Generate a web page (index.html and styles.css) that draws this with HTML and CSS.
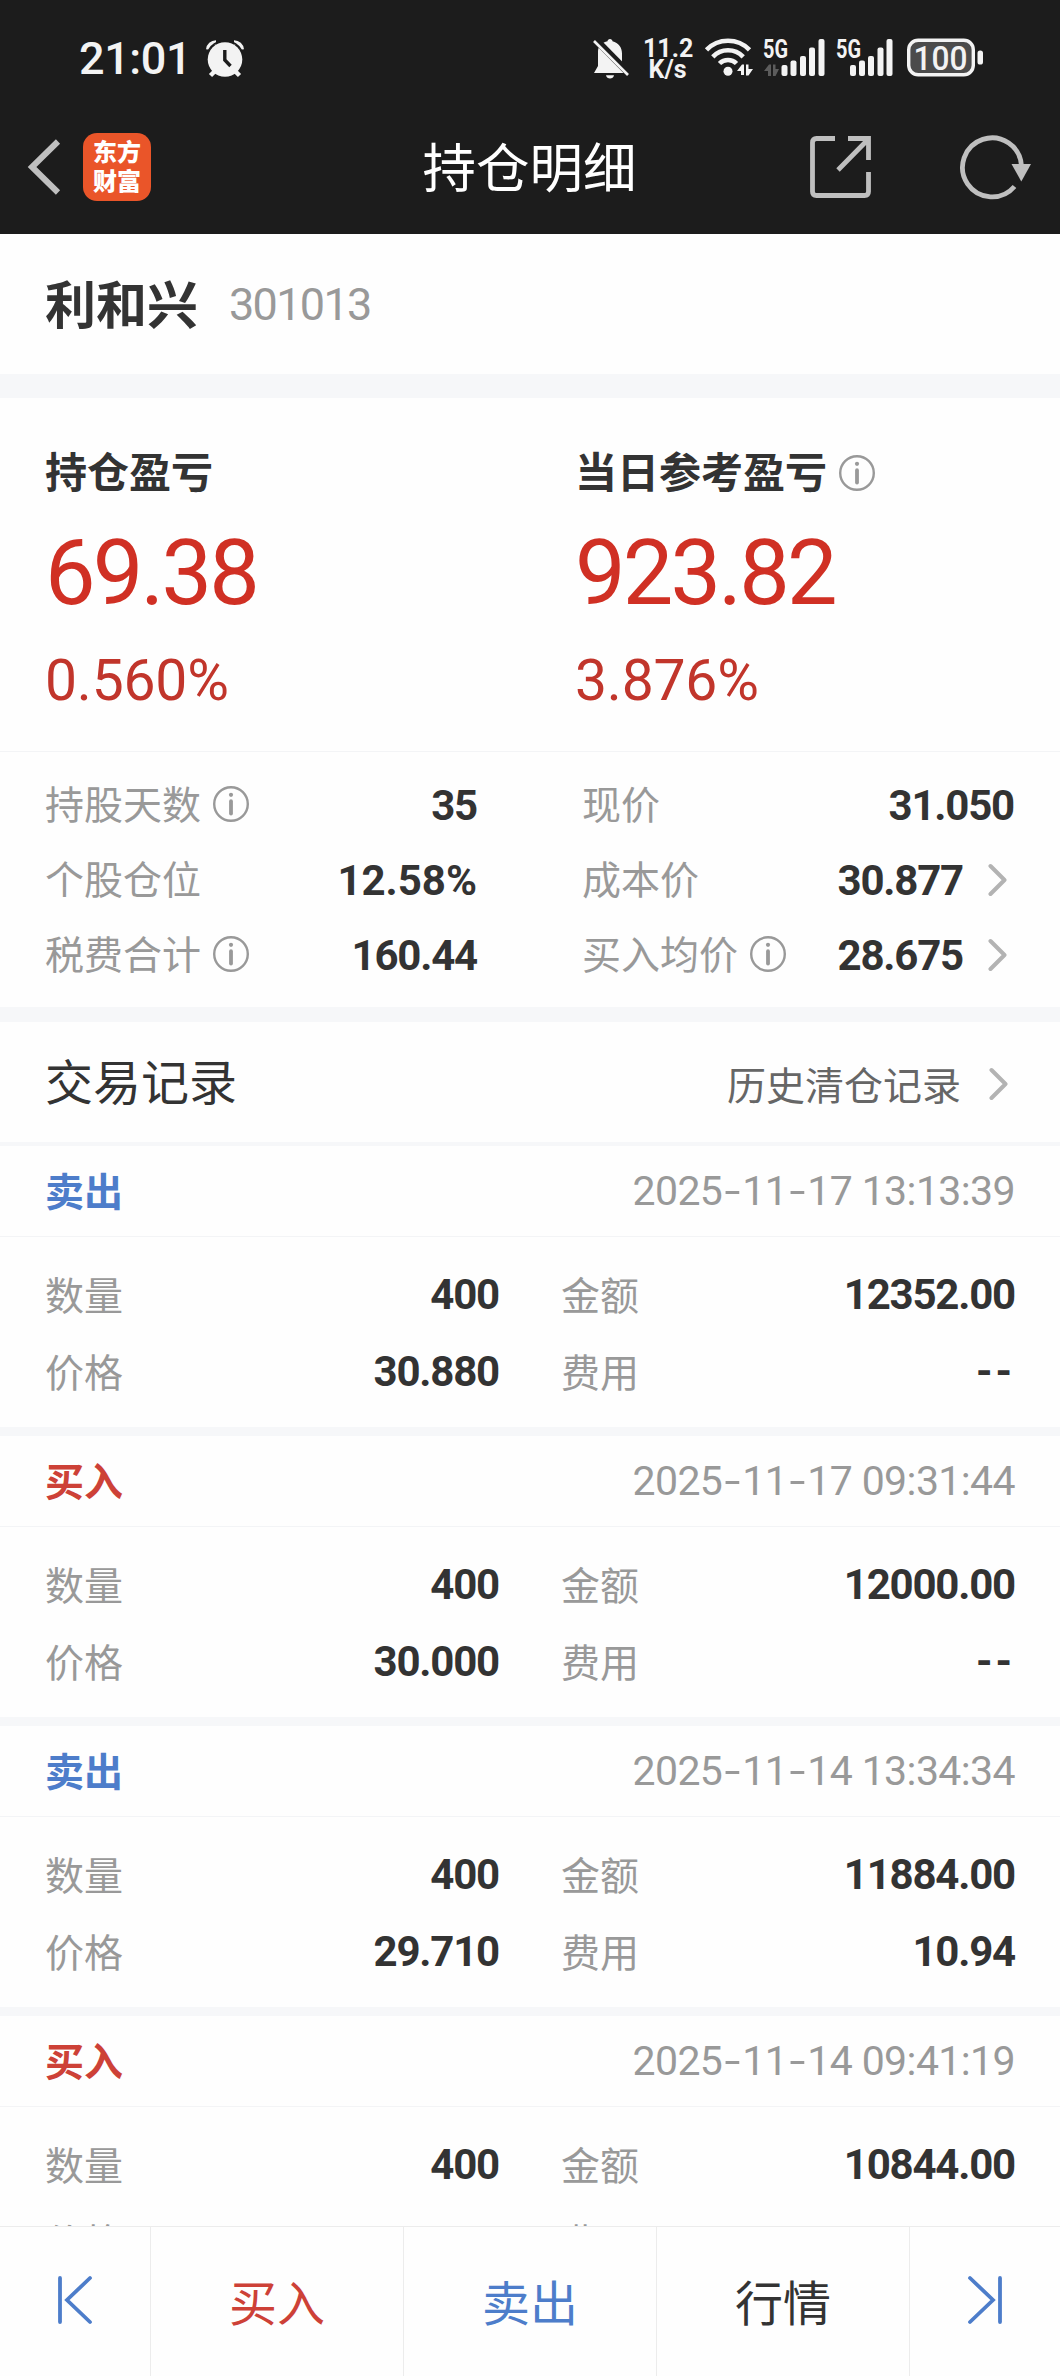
FILE: index.html
```html
<!DOCTYPE html>
<html lang="zh-CN">
<head>
  <meta charset="UTF-8">
  <title>持仓明细</title>
  <link rel="stylesheet" href="styles.css">
</head>
<body>
  <!-- shared icons -->
  <svg class="defs">
    <symbol id="info" viewBox="0 0 36 36">
      <circle cx="18" cy="18" r="16.8" fill="none" stroke="#999" stroke-width="2.4"/>
      <circle cx="18" cy="8.8" r="2.1" fill="#999"/>
      <path d="M18 15.2V27.5" stroke="#999" stroke-width="3.8" stroke-linecap="round"/>
    </symbol>
    <symbol id="arrow" viewBox="0 0 19 34">
      <path d="M2.5 3L16.5 17L2.5 31" fill="none" stroke="#b3b3b3" stroke-width="4" stroke-linecap="round" stroke-linejoin="round"/>
    </symbol>
  </svg>

  <div class="page">
    <header>
      <div class="status">
        <span class="time">21:01</span>
        <svg class="alarm" width="38" height="38" viewBox="0 0 38 38">
          <path d="M9 31L4.5 35.5M29 31L33.5 35.5" stroke="#f3f3f3" stroke-width="4.5"/>
          <circle cx="19" cy="19.5" r="17.3" fill="#f3f3f3"/>
          <path d="M2 9.5A8 8 0 0 1 10 2.2M36 9.5A8 8 0 0 0 28 2.2" fill="none" stroke="#f3f3f3" stroke-width="4"/>
          <path d="M1.5 13A18.5 18.5 0 0 1 12 1.9M36.5 13A18.5 18.5 0 0 0 26 1.9" fill="none" stroke="#1c1c1c" stroke-width="1.6"/>
          <path d="M18.8 10V20L24.5 26" fill="none" stroke="#1c1c1c" stroke-width="3.4"/>
        </svg>
        <div class="status-icons">
          <svg width="36" height="42" viewBox="0 0 36 42">
            <path d="M17 1C18.5 1 19.3 2 19.5 3.2C25.5 4.5 29 9.5 29 15.5V24L32 31L35 35H1L5 28V13C5 8 9.5 4 14.5 3.2C14.7 2 15.5 1 17 1Z" fill="#f3f3f3"/>
            <path d="M13 37.3H21C20.5 39.4 19 40.5 17 40.5S13.5 39.4 13 37.3Z" fill="#f3f3f3"/>
            <path d="M1 0L36 35.5" stroke="#1c1c1c" stroke-width="7"/>
            <path d="M1 3L35 37" stroke="#f3f3f3" stroke-width="2.6"/>
          </svg>
          <div class="speed"><span>11.2</span><span>K/s</span></div>
          <svg class="wifi" width="48" height="42" viewBox="0 0 48 42">
            <g fill="none" stroke="#f3f3f3" stroke-width="4.6">
              <path d="M1.5 11.8A30 30 0 0 1 44.5 11.8"/>
              <path d="M7.8 18.8A21 21 0 0 1 38.2 18.8"/>
              <path d="M14.5 25.5A12 12 0 0 1 31.5 25.5"/>
            </g>
            <circle cx="23" cy="33.3" r="4.5" fill="#f3f3f3"/>
            <path d="M32 33L37 26.5H39V37H36V33ZM41 26.5H43.5V31H48L43.5 37.5H41Z" fill="#f3f3f3"/>
          </svg>
          <svg class="signal" width="62" height="42" viewBox="0 0 62 42">
            <text x="0" y="19.5" textLength="25" lengthAdjust="spacingAndGlyphs">5G</text>
            <path d="M1 33L6 26.5H8V38H5V33ZM10 26.5H12.5V31H16L12.5 38H10Z" fill="#5c5c5c"/>
            <g fill="#f3f3f3">
              <rect x="18.5" y="27" width="6" height="11" rx="2"/>
              <rect x="27.5" y="22.5" width="6" height="15.5" rx="2"/>
              <rect x="37" y="18" width="6" height="20" rx="2"/>
              <rect x="46" y="9.5" width="6" height="28.5" rx="2"/>
              <rect x="55.5" y="1" width="6" height="37" rx="2"/>
            </g>
          </svg>
          <svg class="signal second" width="57" height="42" viewBox="0 0 57 42">
            <text x="0" y="19.5" textLength="25" lengthAdjust="spacingAndGlyphs">5G</text>
            <g fill="#f3f3f3">
              <rect x="14" y="27" width="6" height="11" rx="2"/>
              <rect x="23" y="22.5" width="6" height="15.5" rx="2"/>
              <rect x="32" y="18" width="6" height="20" rx="2"/>
              <rect x="41.5" y="9.5" width="6" height="28.5" rx="2"/>
              <rect x="50.5" y="1" width="6" height="37" rx="2"/>
            </g>
          </svg>
          <svg class="battery" width="76" height="42" viewBox="0 0 76 42">
            <rect x="1.7" y="2.2" width="64.6" height="34.6" rx="9.5" fill="#4b4b4b" stroke="#f3f3f3" stroke-width="3.4"/>
            <rect x="70.5" y="12.5" width="5.5" height="14" rx="2.6" fill="#f3f3f3"/>
            <text x="6.5" y="31.5" textLength="54" lengthAdjust="spacingAndGlyphs">100</text>
          </svg>
        </div>
      </div>
      <nav>
        <div class="nav-left">
          <svg width="33" height="56" viewBox="0 0 33 56">
            <path d="M30 2.5L4 28L30 53.5" fill="none" stroke="#bfbfbf" stroke-width="6"/>
          </svg>
          <div class="logo"><span>东方</span><span>财富</span></div>
        </div>
        <h1>持仓明细</h1>
        <div class="nav-right">
          <svg width="62" height="62" viewBox="0 0 62 62" fill="none" stroke="#bfbfbf" stroke-width="4.8">
            <path d="M25 2.5H6.5Q2.5 2.5 2.5 6.5V55.5Q2.5 59.5 6.5 59.5H54.5Q58.5 59.5 58.5 55.5V36"/>
            <path d="M38 2.5H58.5V24M57.5 4L28 34"/>
          </svg>
          <svg width="71" height="65" viewBox="0 0 71 65">
            <path d="M61.5 31A29.5 29.5 0 1 0 54.5 51.5" fill="none" stroke="#bfbfbf" stroke-width="4.8"/>
            <path d="M51.5 29H71L61.3 46.5Z" fill="#bfbfbf"/>
          </svg>
        </div>
      </nav>
    </header>

    <main>
      <section class="stock">
        <h2>利和兴</h2>
        <span class="code">301013</span>
      </section>

      <section class="profit">
        <div class="profit-item">
          <h3>持仓盈亏</h3>
          <p class="amount">69.38</p>
          <p class="percent">0.560%</p>
        </div>
        <div class="profit-item">
          <h3>当日参考盈亏 <svg class="info"><use href="#info"/></svg></h3>
          <p class="amount">923.82</p>
          <p class="percent">3.876%</p>
        </div>
      </section>

      <section class="detail">
        <div class="col">
          <div class="row"><label>持股天数</label><svg class="info"><use href="#info"/></svg><b>35</b></div>
          <div class="row"><label>个股仓位</label><b class="rate">12.58%</b></div>
          <div class="row"><label>税费合计</label><svg class="info"><use href="#info"/></svg><b>160.44</b></div>
        </div>
        <div class="col">
          <div class="row"><label>现价</label><b>31.050</b></div>
          <div class="row"><label>成本价</label><b>30.877</b><svg class="arrow"><use href="#arrow"/></svg></div>
          <div class="row"><label>买入均价</label><svg class="info"><use href="#info"/></svg><b>28.675</b><svg class="arrow"><use href="#arrow"/></svg></div>
        </div>
      </section>

      <section class="records-title">
        <h2>交易记录</h2>
        <a>历史清仓记录</a>
        <svg class="arrow"><use href="#arrow"/></svg>
      </section>

      <section class="record">
        <div class="record-head"><span class="sell">卖出</span><time>2025<i>-</i>11<i>-</i>17 13:13:39</time></div>
        <div class="record-body">
          <div class="row"><label>数量</label><b>400</b></div>
          <div class="row"><label>金额</label><b>12352.00</b></div>
          <div class="row"><label>价格</label><b>30.880</b></div>
          <div class="row"><label>费用</label><b class="none">--</b></div>
        </div>
      </section>

      <section class="record">
        <div class="record-head"><span class="buy">买入</span><time>2025<i>-</i>11<i>-</i>17 09:31:44</time></div>
        <div class="record-body">
          <div class="row"><label>数量</label><b>400</b></div>
          <div class="row"><label>金额</label><b>12000.00</b></div>
          <div class="row"><label>价格</label><b>30.000</b></div>
          <div class="row"><label>费用</label><b class="none">--</b></div>
        </div>
      </section>

      <section class="record">
        <div class="record-head"><span class="sell">卖出</span><time>2025<i>-</i>11<i>-</i>14 13:34:34</time></div>
        <div class="record-body">
          <div class="row"><label>数量</label><b>400</b></div>
          <div class="row"><label>金额</label><b>11884.00</b></div>
          <div class="row"><label>价格</label><b>29.710</b></div>
          <div class="row"><label>费用</label><b>10.94</b></div>
        </div>
      </section>

      <section class="record">
        <div class="record-head"><span class="buy">买入</span><time>2025<i>-</i>11<i>-</i>14 09:41:19</time></div>
        <div class="record-body">
          <div class="row"><label>数量</label><b>400</b></div>
          <div class="row"><label>金额</label><b>10844.00</b></div>
          <div class="row"><label>价格</label></div>
          <div class="row"><label>费用</label></div>
        </div>
      </section>
    </main>

    <footer>
      <div class="tab">
        <svg width="34" height="48" viewBox="0 0 34 48" fill="none" stroke="#4d7dca" stroke-width="3.8" stroke-linecap="round">
          <path d="M2 2V46M32 2L9 24L32 46"/>
        </svg>
      </div>
      <div class="tab buy">买入</div>
      <div class="tab sell">卖出</div>
      <div class="tab">行情</div>
      <div class="tab">
        <svg width="34" height="48" viewBox="0 0 34 48" fill="none" stroke="#4d7dca" stroke-width="3.8" stroke-linecap="round">
          <path d="M32 2V46M2 2L25 24L2 46"/>
        </svg>
      </div>
    </footer>
  </div>
</body>
</html>
```

FILE: styles.css
```css
* {
  margin: 0;
  padding: 0;
  box-sizing: border-box;
}

body {
  background-color: #fefefe;
  color: #333;
  font-family: Roboto, "Noto Sans CJK SC", sans-serif;
}

svg {
  display: block;
  flex-shrink: 0;
  overflow: visible;
}

.defs {
  display: none;
}

.page {
  display: flex;
  flex-direction: column;
  width: 1060px;
  height: 2376px;
  overflow: hidden;
}

/* top */
header {
  height: 234px;
  flex-shrink: 0;
  background-color: #1c1c1c;
}

.status {
  display: flex;
  align-items: center;
  height: 100px;
  padding: 16px 77px 0 79px;
  color: #f3f3f3;
}

.time {
  width: 127px;
  font-size: 45px;
  font-weight: 500;
  letter-spacing: -0.4px;
}

.alarm {
  margin-top: 2px;
}

.status-icons {
  display: flex;
  align-items: center;
  margin-left: auto;
  padding-top: 2px;
}

.speed {
  width: 49px;
  margin: -1px 13px 0 14px;
  font-size: 25px;
  font-weight: 700;
  line-height: 21px;
  text-align: center;
}

.speed span {
  display: block;
}

.signal {
  margin-left: 10px;
}

.signal.second {
  margin-left: 11px;
}

.signal text {
  fill: #f3f3f3;
  font-size: 26px;
  font-weight: 700;
}

.battery {
  margin-left: 14px;
}

.battery text {
  fill: #f3f3f3;
  font-size: 34px;
  font-weight: 500;
}

nav {
  display: grid;
  grid-template-columns: 1fr auto 1fr;
  align-items: center;
  height: 134px;
  padding: 0 29px 0 28px;
}

.nav-left,
.nav-right {
  display: flex;
  align-items: center;
}

.nav-left {
  gap: 22px;
}

.nav-right {
  justify-content: flex-end;
  gap: 88px;
}

.logo {
  width: 68px;
  height: 68px;
  padding-top: 6px;
  border-radius: 14px;
  background-color: #ea5529;
  color: #fff;
  font-size: 24px;
  font-weight: 900;
  line-height: 29px;
  text-align: center;
}

.logo span {
  display: block;
}

h1 {
  padding-top: 6px;
  font-size: 53.5px;
  font-weight: 400;
  line-height: 60px;
  color: #fff;
}

/* content */
main {
  flex: 1;
  min-height: 0;
  overflow: hidden;
}

.stock {
  display: flex;
  align-items: center;
  height: 164px;
  padding-left: 45px;
  border-bottom: 24px solid #f6f7f9;
}

.stock h2 {
  padding-top: 5px;
  font-size: 51px;
  font-weight: 700;
  line-height: 60px;
}

.code {
  margin-left: 31px;
  font-size: 45px;
  letter-spacing: -1.7px;
  color: #999;
}

.profit {
  display: flex;
  height: 354px;
  padding: 51px 0 0 45px;
  border-bottom: 1px solid #f3f4f6;
}

.profit-item {
  width: 530px;
  flex-shrink: 0;
}

h3 {
  display: flex;
  align-items: center;
  gap: 12px;
  font-size: 42px;
  font-weight: 700;
  line-height: 50px;
}

.amount {
  margin-top: 20px;
  font-size: 90px;
  line-height: 110px;
  letter-spacing: -2.8px;
  color: #d03024;
}

.percent {
  margin-top: 17px;
  font-size: 57px;
  line-height: 70px;
  letter-spacing: -0.2px;
  color: #c1352b;
}

.info {
  width: 36px;
  height: 36px;
  margin-bottom: 3px;
}

.detail {
  display: flex;
  height: 270px;
  padding: 16px 45px 0;
  border-bottom: 15px solid #f6f7f9;
}

.detail .col {
  width: 432px;
  margin-right: 105px;
}

.detail .col + .col {
  margin-right: 0;
}

.detail .row {
  height: 75px;
}

.row {
  display: flex;
  align-items: center;
}

.row label {
  padding-top: 1px;
  font-size: 39px;
  line-height: 50px;
  color: #999;
}

.row .info {
  margin-left: 12px;
}

.row b {
  margin-left: auto;
  font-size: 42px;
  line-height: 50px;
  letter-spacing: -1.2px;
}

.row b.none {
  letter-spacing: 3px;
}

.row b.rate {
  letter-spacing: 0;
}

.arrow {
  width: 19px;
  height: 34px;
  margin: 0 7px 2px 25px;
}

.records-title {
  display: flex;
  align-items: center;
  height: 124px;
  padding: 0 45px;
  border-bottom: 4px solid #f6f7f9;
}

.records-title h2 {
  padding-bottom: 6px;
  font-size: 48px;
  font-weight: 400;
}

.records-title a {
  margin-left: auto;
  padding-top: 2px;
  font-size: 39px;
  color: #666;
}

.records-title .arrow {
  margin: 4px 7px 0 28px;
}

.record {
  height: 290px;
  border-bottom: 9px solid #f6f7f9;
}

.record-head {
  display: flex;
  align-items: center;
  justify-content: space-between;
  height: 91px;
  padding: 0 45px;
  border-bottom: 1px solid #f3f4f6;
  font-size: 39px;
  font-weight: 700;
}

.record-head span {
  padding-bottom: 4px;
}

.record-head time {
  font-size: 41px;
  font-weight: 400;
  letter-spacing: -0.6px;
  color: #999;
}

.record-head i {
  display: inline-block;
  width: 20px;
  text-align: center;
  font-style: normal;
  transform: scaleX(1.4);
}

.record-body {
  display: grid;
  grid-template-columns: 454px 454px;
  grid-auto-rows: 77px;
  column-gap: 62px;
  padding: 19px 45px 0;
}

.record-body label {
  padding-top: 4px;
}

.buy {
  color: #cd4137;
}

.sell {
  color: #4d7dca;
}

/* bottom tabs */
footer {
  display: grid;
  grid-template-columns: 151px 253px 253px 253px 1fr;
  height: 150px;
  flex-shrink: 0;
  border-top: 1px solid #ececec;
}

.tab {
  display: flex;
  align-items: center;
  justify-content: center;
  padding-bottom: 4px;
  border-right: 1px solid #ececec;
  font-size: 48px;
}

.tab:last-child {
  border-right: none;
}
```
